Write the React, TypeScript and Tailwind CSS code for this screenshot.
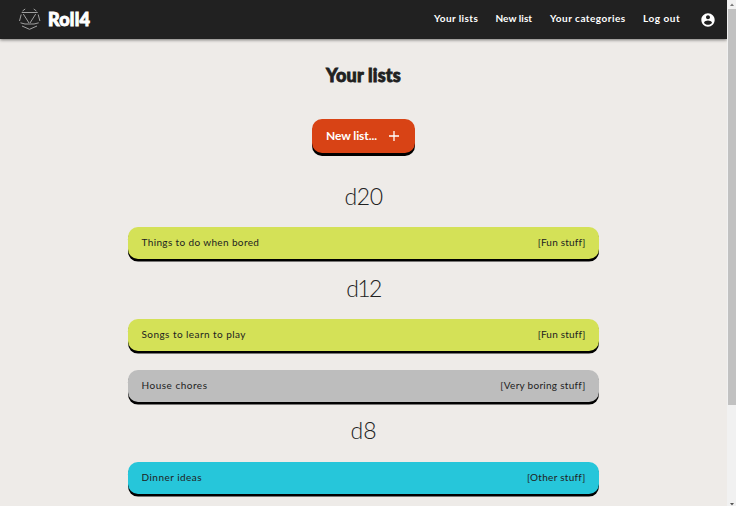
import React from "react";

type Item = { title: string; category: string; color: string; titleTracking: string; categoryTracking: string };
type Group = { name: string; items: Item[]; nameTracking: string };

const groups: Group[] = [
  {
    name: "d20",
    nameTracking: "tracking-[-0.4px]",
    items: [
      { title: "Things to do when bored", category: "[Fun stuff]", color: "bg-[#d4e157]", titleTracking: "tracking-[0.37px]", categoryTracking: "tracking-[0.2px]" },
    ],
  },
  {
    name: "d12",
    nameTracking: "tracking-[-1.6px]",
    items: [
      { title: "Songs to learn to play", category: "[Fun stuff]", color: "bg-[#d4e157]", titleTracking: "tracking-[0.44px]", categoryTracking: "tracking-[0.2px]" },
      { title: "House chores", category: "[Very boring stuff]", color: "bg-[#bdbdbd]", titleTracking: "tracking-[0.5px]", categoryTracking: "tracking-[0.28px]" },
    ],
  },
  {
    name: "d8",
    nameTracking: "tracking-[0px]",
    items: [
      { title: "Dinner ideas", category: "[Other stuff]", color: "bg-[#26c6da]", titleTracking: "tracking-[0.47px]", categoryTracking: "tracking-[0.28px]" },
    ],
  },
];

function DiceLogo() {
  return (
    <svg className="mb-0.5 ml-[18px] h-6 w-6 shrink-0" viewBox="0 0 24 24" fill="none" stroke="#a0a0a0" strokeWidth="1">
      <path d="M4.500 4 7.200 2M15.700 2l2.700 2M3.700 5.500h16M5.300 7 11 16M17.700 7 12 16M3.200 7.500 1.500 14M20.200 7.500l1.700 6.500M2.500 15.800 7 17h9l4.700-1.200M4 19l7.500 3.300L19 19" />
    </svg>
  );
}

function Header() {
  return (
    <header className="flex h-[39px] shrink-0 items-center bg-[#212121] text-white shadow-[0_1px_3px_rgba(0,0,0,0.5)]">
      <DiceLogo />
      <span className="mb-0.5 ml-[6px] w-[60px] text-[18px] leading-5 font-black tracking-[0.2px] whitespace-nowrap [-webkit-text-stroke:0.9px_white]">Roll4</span>
      <nav className="mb-[3px] ml-auto flex items-center text-[10px] leading-4 font-bold whitespace-nowrap">
        <a className="w-[61.500px] tracking-[0.4px]">Your lists</a>
        <a className="w-[54.500px] tracking-[0.05px]">New list</a>
        <a className="w-[93px] tracking-[0.48px]">Your categories</a>
        <a className="w-[57px] tracking-[0.55px]">Log out</a>
      </nav>
      <svg className="mr-[11px] h-4 w-4" viewBox="0 0 24 24" fill="white">
        <path d="M12 2C6.480 2 2 6.480 2 12s4.480 10 10 10 10-4.480 10-10S17.520 2 12 2zm0 3c1.660 0 3 1.340 3 3s-1.340 3-3 3-3-1.340-3-3 1.340-3 3-3zm0 14.200c-2.500 0-4.710-1.280-6-3.220.030-1.990 4-3.080 6-3.080 1.990 0 5.970 1.090 6 3.080-1.290 1.940-3.500 3.220-6 3.220z" />
      </svg>
    </header>
  );
}

function ListCard({ item }: { item: Item }) {
  return (
    <div className={`flex h-[31.75px] items-center justify-between rounded-[10px] px-[13.5px] pb-[1.5px] text-[10px] whitespace-nowrap shadow-[0_2.6px_0_#000] ${item.color}`}>
      <span className={item.titleTracking}>{item.title}</span>
      <span className={item.categoryTracking}>{item.category}</span>
    </div>
  );
}

export default function App() {
  return (
    <div className="flex h-[507px] w-[736px] overflow-hidden border-b border-white bg-[#eeebe8] font-['Lato',sans-serif] text-[#212121]">
      <div className="flex w-[727px] flex-col">
        <Header />
        <main className="flex flex-col items-center">
          <h1 className="mt-[25px] text-[18px] leading-[22px] font-black tracking-[0.2px] [-webkit-text-stroke:0.8px_#212121]">Your lists</h1>
          <button className="mt-[33px] flex h-[34px] w-[103px] items-center rounded-[10px] bg-[#d84315] pl-[14px] text-[12px] font-bold text-white shadow-[0_3px_0_#000]">
            <span className="w-[62px] text-left tracking-[-0.1px]">New list...</span>
            <svg className="h-3 w-3" viewBox="0 0 12 12" fill="none" stroke="white" strokeWidth="1.300">
              <path d="M6 1v10M1 6h10" />
            </svg>
          </button>
          <div className="mt-[19px] w-[471px]">
            {groups.map((group) => (
              <section key={group.name} className="mb-[5.1px]">
                <h2 className={`flex h-[55.250px] items-start justify-center pt-[8.500px] text-[23px] leading-[30px] font-light ${group.nameTracking}`}>{group.name}</h2>
                <div className="flex flex-col gap-[18.850px]">
                  {group.items.map((item) => (
                    <ListCard key={item.title} item={item} />
                  ))}
                </div>
              </section>
            ))}
          </div>
        </main>
      </div>
      <div className="flex w-[9px] flex-col justify-between bg-[#f1f1f1] pl-px">
        <div className="flex h-[405px] flex-col">
          <svg className="h-[9px] w-2" viewBox="0 0 8 9"><path d="M2 6 4 3.500 6 6z" fill="#777" /></svg>
          <div className="flex-1 bg-[#c1c1c1]" />
        </div>
        <svg className="h-[5px] w-2" viewBox="0 0 8 5"><path d="M2 2h4L4 4.500z" fill="#555" /></svg>
      </div>
    </div>
  );
}
